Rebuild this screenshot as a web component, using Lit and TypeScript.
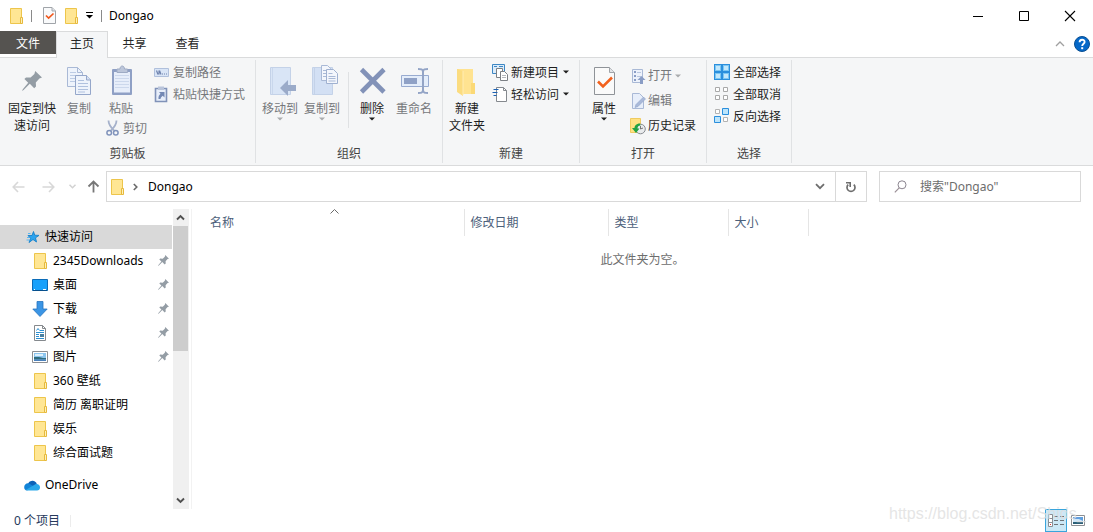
import { LitElement, html, svg, css, nothing, TemplateResult } from "lit";
import { customElement, property } from "lit/decorators.js";

/* ---------- icon artwork ---------- */

interface Art {
  w: number;
  h: number;
  body: TemplateResult;
}

const folderBody = svg`
  <path d="M2.5.5h11v15h-11z" fill="#ffe694" stroke="#edc54b"/>
  <path d="M12.5 9.5h2v6h-2z" fill="#fff0b8" stroke="#e6b93c"/>`;

const pinShape = svg`<path d="M13.2 0 20 6.6l-2.6.8-3.6 4 .2 4.2-1.8 1.6-4.4-4.4L1.6 19 0 20l.8-1.8 5.4-6.4L2.4 8l1.6-1.6 4.6.2 3.8-3.6z" fill="#949da5"/>`;

const ART: Record<string, Art> = {
  folder: { w: 16, h: 16, body: folderBody },
  checkDoc: {
    w: 13, h: 17,
    body: svg`<path d="M.5.5h8.5l3.5 3.5v12.5H.5z" fill="#f9fafb" stroke="#a0a4a9"/>
      <path d="M9 .5V4h3.5" fill="#dfe2e6" stroke="#a5a9ae"/>
      <path d="M3 8.5l2.600 2.600L10.500 6.500" fill="none" stroke="#f0571c" stroke-width="1.700"/>`,
  },
  qatMenu: { w: 7, h: 7, body: svg`<path d="M0 .5h7" stroke="#000"/><path d="M0 3h7L3.500 6.500z"/>` },
  min: { w: 10, h: 10, body: svg`<path d="M0 5.500h10" stroke="#000"/>` },
  max: { w: 10, h: 10, body: svg`<path d="M.5.5h9v9h-9z" fill="none" stroke="#000"/>` },
  close: { w: 10, h: 10, body: svg`<path d="M0 0l10 10M10 0L0 10" stroke="#000" stroke-width="1.100"/>` },
  collapse: { w: 10, h: 6, body: svg`<path d="M1 5l4-4 4 4" fill="none" stroke="#a0a0a0" stroke-width="1.300"/>` },
  help: {
    w: 16, h: 16,
    body: svg`<circle cx="8" cy="8" r="7.500" fill="#0568c8" stroke="#0a4f92"/>
      <path d="M5.600 6.200c0-3.200 5-3.200 5-.3C10.600 7.700 8.200 7.700 8.200 10" fill="none" stroke="#fff" stroke-width="1.900"/>
      <path d="M7.200 11.200h2v2h-2z" fill="#fff"/>`,
  },
  bigPin: { w: 32, h: 32, body: svg`<g transform="translate(6 5)">${pinShape}</g>` },
  pin: { w: 11, h: 11, body: svg`<g transform="scale(.55)">${pinShape}</g>` },
  copy: {
    w: 32, h: 32,
    body: svg`<path d="M4.500 1.500h10l5 5v14h-15z" fill="#eef3fb" stroke="#a9b9d6"/>
      <path d="M14.500 1.500v5h5" fill="none" stroke="#a9b9d6"/>
      <path d="M7 6.500h6M7 9.500h10M7 12.500h10M7 15.500h10" stroke="#bccbe4"/>
      <path d="M12.500 9.500h11l4 4v15h-15z" fill="#eef3fb" stroke="#95a7ca"/>
      <path d="M23.500 9.500v4.500h4.500" fill="#d5e0f2" stroke="#95a7ca"/>
      <path d="M15 14.500h6M15 17.500h10M15 20.500h10M15 23.500h10M15 26h7" stroke="#b0c1de"/>`,
  },
  paste: {
    w: 32, h: 32,
    body: svg`<rect x="7" y="3" width="20" height="26" rx="1" fill="#8fa0c5"/>
      <path d="M9 6h16v20.500H9z" fill="#e7eefa"/>
      <path d="M10 9.500h14M10 12.500h14M10 15.500h14M10 18.500h14M10 21.500h14" stroke="#ccd8ec"/>
      <path d="M12 3h3c0-4 4.500-4 4.500 0h3v3.500H12z" fill="#bcc6da" stroke="#9eabc4"/>`,
  },
  cut: {
    w: 13, h: 16,
    body: svg`<path d="M2.500.5c0 4 2.500 7 5.500 10M10.500.5c0 4-2.500 7-5.500 10" fill="none" stroke="#a5b1cb" stroke-width="1.800"/>
      <circle cx="3.200" cy="12.700" r="2.300" fill="none" stroke="#8093bb" stroke-width="1.500"/>
      <circle cx="9.800" cy="12.700" r="2.300" fill="none" stroke="#8093bb" stroke-width="1.500"/>`,
  },
  path: {
    w: 16, h: 16,
    body: svg`<path d="M1.500 4.500h14v8h-14z" fill="#d9e5f7" stroke="#b0c0dc"/>
      <path d="M3.500 6.500l1.500 4M6 6.500v4M6.500 6.500l1.500 4" stroke="#6f83ae" stroke-width="1.200"/>
      <path d="M9 10h1M11 10h1M13 10h1" stroke="#6f83ae"/>`,
  },
  shortcut: {
    w: 16, h: 16,
    body: svg`<path d="M2.500 2.500h11v13h-11z" fill="#e7eefa" stroke="#8092b8" stroke-width="1.600"/>
      <path d="M5 .5h6V4H5z" fill="#b9c4da"/>
      <path d="M6 6h5.500v5.500l-1.800-1.800C8 11 7.700 12 7.500 13L5.500 13c-.3-2.500.7-4 2-5.200z" fill="#7388b4"/>`,
  },
  move: {
    w: 32, h: 32,
    body: svg`<path d="M6.500 1.500h20v27h-20z" fill="#d9e5f6" stroke="#c4d2e8"/><path d="M8.500 2v26" stroke="#c9d7ec"/>
      <path d="M16 22l8-8v5h8v6h-8v5z" fill="#9babc9"/>`,
  },
  copyTo: {
    w: 32, h: 32,
    body: svg`<path d="M6.500 1.500h20v27h-20z" fill="#d3e0f4" stroke="#c4d2e8"/><path d="M8.500 2v26" stroke="#c4d2e8"/>
      <path d="M15.500-.5h6l3 3v12h-9z" fill="#f3f6fc" stroke="#a9b9d6"/>
      <path d="M17 4.500h4M17 7.500h4M17 10.500h4" stroke="#a9b9d6"/>
      <path d="M20.500 3.500h7l4 4v10h-11z" fill="#f3f6fc" stroke="#a0b1d0"/>
      <path d="M22.500 7.500h4M22.500 10.500h7M22.500 12.500h7M22.500 15h7" stroke="#a9b9d6"/>`,
  },
  delete: { w: 32, h: 32, body: svg`<path d="M5.500 3.500l22.500 22.500M28 3.500L5.500 26" stroke="#8292b8" stroke-width="4.600"/>` },
  rename: {
    w: 32, h: 32,
    body: svg`<path d="M3.500 9.500h27v11h-27z" fill="#e4edfa" stroke="#98abd0"/>
      <path d="M6 12h13v6H6z" fill="#8fa1c6"/>
      <path d="M20 3c3 0 5 0 5 3v18c0 3-2 3-5 3M30 3c-3 0-5 0-5 3v18c0 3 2 3 5 3" fill="none" stroke="#93a4c6" stroke-width="2"/>`,
  },
  bigFolder: {
    w: 32, h: 32,
    body: svg`<path d="M6 3h16v14h2v11H10l-4-3z" fill="#ffe391"/><path d="M6 3l6 2v25l-6-4z" fill="#fbdc80"/>
      <path d="M20 17h4v11h-4z" fill="#fbd976"/><path d="M12 5v24" stroke="#ffedb5"/>`,
  },
  newItem: {
    w: 16, h: 16,
    body: svg`<path d="M.5.5h12v9H.5z" fill="#dcecfa" stroke="#3d87c4"/><path d="M2 2.500h3M7 2.500h4" stroke="#3d87c4"/>
      <path d="M4.500 4.500h6v9h-6z" fill="#fff" stroke="#7c8085"/>
      <path d="M8.500 7.500h4l3 3v6h-7z" fill="#fff" stroke="#7c8085"/><path d="M10 11.500h4M10 13.500h4" stroke="#b4b8bd"/>`,
  },
  easy: {
    w: 16, h: 16,
    body: svg`<path d="M4.500 1.500h7l3 3v11h-10z" fill="#fff" stroke="#85898e"/><path d="M11.500 1.500v3h3" fill="none" stroke="#85898e"/>
      <path d="M1.500 3.500h5M.5 6.500h5M1.500 9.500h3" stroke="#1c62b3"/>`,
  },
  props: {
    w: 32, h: 32,
    body: svg`<path d="M6.500 1.500h15l5 5v22h-20z" fill="#fafafa" stroke="#8f9398"/>
      <path d="M21.500 1.500v5h5" fill="#e3e5e8" stroke="#a0a4a9"/>
      <path d="M10 15.500l5 5L24 11.500" fill="none" stroke="#f2611d" stroke-width="2.600"/>`,
  },
  open: {
    w: 16, h: 16,
    body: svg`<path d="M2.500 1.500h10v13h-10z" fill="#edf2fb" stroke="#a9b9d6"/>
      <path d="M4 3h2v2H4zM4 7h2v2H4zM4 11h2v2H4z" fill="#8a9dc5"/><path d="M7 4.500h4M7 8.500h4" stroke="#b8c6df"/>
      <path d="M11.500 8l4 4h-2.500V16h-3v-4H7.500z" fill="#8a9dc5"/>`,
  },
  edit: {
    w: 16, h: 16,
    body: svg`<path d="M2.500.5h7l4 4v11h-11z" fill="#e7eefa" stroke="#a9b9d6"/>
      <path d="M5 14.500l1-3L13.500 4l2 2L8 13.500z" fill="#a9b9d9" stroke="#8fa2c8" stroke-width=".6"/>`,
  },
  history: {
    w: 16, h: 16,
    body: svg`<path d="M.5.5h10v14H.5z" fill="#ffe182" stroke="#efcb60"/>
      <circle cx="10.500" cy="11" r="4.800" fill="#e9ebed" stroke="#868b90"/>
      <path d="M10.500 8v3l2.500-1" fill="none" stroke="#777"/>
      <path d="M10 5.500C6 5.500 4.500 8 4.500 10H2l4 5 3.500-4.500H7.500C7.500 8.500 8.500 7.500 10.500 7.500z" fill="#23a243"/>`,
  },
  selAll: {
    w: 16, h: 16,
    body: svg`<path d="M0 0h16v16H0z" fill="#2b8fdd"/>
      <path d="M1 1h6v6H1zM9 1h6v6H9zM1 9h6v6H1zM9 9h6v6H9z" fill="#7cc6f3"/>
      <path d="M2 2h4v4H2zM10 2h4v4h-4zM2 10h4v4H2zM10 10h4v4h-4z" fill="#c3e8fc"/>`,
  },
  selNone: { w: 16, h: 16, body: svg`<path d="M1.500 1.500h4v4h-4zM9.500 1.500h4v4h-4zM1.500 9.500h4v4h-4zM9.500 9.500h4v4h-4z" fill="#fff" stroke="#a9a9a9"/>` },
  selInv: {
    w: 16, h: 16,
    body: svg`<path d="M1.500 1.500h4v4h-4zM9.500 9.500h4v4h-4z" fill="#fff" stroke="#b3b3b3"/>
      <path d="M8.500.5h6v6h-6zM.5 8.500h6v6h-6z" fill="#bce4fb" stroke="#2b8fdd"/>`,
  },
  left: { w: 13, h: 12, body: svg`<path d="M12.500 6H1.500M6 1L1.200 6 6 11" fill="none" stroke="#d8d8d8" stroke-width="1.600"/>` },
  right: { w: 13, h: 12, body: svg`<path d="M.5 6h11M7 1l4.800 5L7 11" fill="none" stroke="#d8d8d8" stroke-width="1.600"/>` },
  recent: { w: 7, h: 5, body: svg`<path d="M.5.8l3 3 3-3" fill="none" stroke="#d2d2d2" stroke-width="1.500"/>` },
  up: { w: 13, h: 13, body: svg`<path d="M6.500 12.500V2M1.500 6.500l5-5 5 5" fill="none" stroke="#777" stroke-width="1.800"/>` },
  crumb: { w: 5, h: 8, body: svg`<path d="M.8 1l3 3-3 3" fill="none" stroke="#6a6a6a" stroke-width="1.600"/>` },
  down: { w: 10, h: 7, body: svg`<path d="M1 1.200l4 4 4-4" fill="none" stroke="#6e6e6e" stroke-width="1.800"/>` },
  refresh: {
    w: 12, h: 12,
    body: svg`<path d="M3.200 3.600a4 4 0 1 0 5.600 0" fill="none" stroke="#6e6e6e" stroke-width="1.700"/>
      <path d="M1 1.800h4.200v4.200" fill="none" stroke="#6e6e6e" stroke-width="1.600"/>`,
  },
  search: { w: 13, h: 13, body: svg`<circle cx="8" cy="4.800" r="4" fill="none" stroke="#8b8590"/><path d="M5.200 7.800L.8 12.300" stroke="#9b8f97" stroke-width="1.200"/>` },
  star: {
    w: 16, h: 16,
    body: svg`<path d="M9.500 2.500l1.200 3.700 4.300.2-3.500 2.400 1 4.200-3.500-2.500L5 13.500l1.600-4.200L4 6.500h4z" fill="#2ba3ee" stroke="#1580c9" stroke-width=".9"/>
      <path d="M4 4.500h2.500M3 8.500h2M2.500 11h3" stroke="#5bb6f0"/>`,
  },
  desktop: {
    w: 16, h: 16,
    body: svg`<path d="M.5 2.500h15v11H.5z" fill="#18a1fb" stroke="#0b6cb8"/><path d="M1 13.500h14" stroke="#074f8b"/>
      <path d="M2 12.500h1M11 12.500h3" stroke="#fff"/>`,
  },
  download: { w: 16, h: 16, body: svg`<path d="M5 .5h6v7.500h4.200L8 15.500.8 8H5z" fill="#3b95e5" stroke="#2674bf" stroke-width=".8"/>` },
  docs: {
    w: 16, h: 16,
    body: svg`<path d="M2.500.5h8l3 3v12h-11z" fill="#fff" stroke="#85898d"/><path d="M10.500.5v3h3" fill="none" stroke="#85898d"/>
      <path d="M4.500 5.500l1.500-2 1.500 2M8 5.500h4M4 7.500h8M4 9.500h3M4 11.500h3M4 13.500h8" fill="none" stroke="#2d8fd0"/>
      <path d="M8 9h4v3H8z" fill="#4a7f9f"/>`,
  },
  picture: {
    w: 16, h: 16,
    body: svg`<path d="M.5 2.500h15v11H.5z" fill="#fff" stroke="#8c8f93"/><path d="M2 4h12v8H2z" fill="#8cc5ee"/>
      <path d="M3 5h8v2H3z" fill="#dcf0fc"/><path d="M2 8h5l4 1h3v1.500H2z" fill="#2f6c7c"/><path d="M2 10.500h12V12H2z" fill="#4a80bb"/>`,
  },
  cloud: {
    w: 16, h: 16,
    body: svg`<path d="M4 6.500a4.800 4.800 0 0 1 8.800.5L8 11z" fill="#0c62b8"/><path d="M.2 10.500A3.600 3.600 0 0 1 5 6.600l6 3.400-8 3.400A3 3 0 0 1 .2 10.500z" fill="#1184d8"/>
      <path d="M2 12.800l9-5.300c2.500-1.200 5 .6 5 3 0 1.800-1.300 3-3 3H4c-1 0-1.600-.3-2-.7z" fill="#29a8ea"/>`,
  },
  chevUp: { w: 9, h: 7, body: svg`<path d="M1 5.500L4.500 2 8 5.500" fill="none" stroke="#505050" stroke-width="1.900"/>` },
  chevDown: { w: 9, h: 7, body: svg`<path d="M1 1.500L4.500 5 8 1.500" fill="none" stroke="#505050" stroke-width="1.900"/>` },
  sort: { w: 9, h: 5, body: svg`<path d="M.5 4.500l4-4 4 4" fill="none" stroke="#6a6a6a"/>` },
  caret: { w: 6, h: 4, body: svg`<path d="M0 .5h6L3 3.500z" fill="currentColor"/>` },
  details: {
    w: 16, h: 14,
    body: svg`<path d="M.5.500h4v12h-4zM.5 4.500h4M.5 8.500h4" fill="#fff" stroke="#8a8f94"/>
      <path d="M2 10h1v1H2z" fill="#d33"/><path d="M6 2.500h4M12 2.500h4M6 6.500h4M12 6.500h4M6 10.500h4M12 10.500h4" stroke="#6f7479"/>`,
  },
  thumbs: {
    w: 14, h: 11,
    body: svg`<path d="M.5.500h13v10H.5z" fill="#fff" stroke="#8c8f93"/><path d="M2 2h10v7H2z" fill="#5f9fdf"/>
      <path d="M2 4l6 0 4 2v1H2z" fill="#cfe6f8"/><path d="M2 7h10v2H2z" fill="#2c5f77"/>`,
  },
};

const icon = (name: string) => {
  const a = ART[name];
  return html`<svg class="ico" aria-hidden="true" width=${a.w} height=${a.h} viewBox="0 0 ${a.w} ${a.h}">${a.body}</svg>`;
};

const base = css`
  *, *::before, *::after { box-sizing: border-box; }
  button, input {
    font: inherit; color: inherit; background: none; border: 0; padding: 0; margin: 0; border-radius: 0;
  }
  .ico { display: block; flex: none; overflow: visible; }
`;

/* ---------- ribbon button ---------- */

@customElement("ribbon-button")
class RibbonButton extends LitElement {
  @property() icon = "";
  @property() label = "";
  @property({ type: Boolean }) large = false;
  @property({ type: Boolean }) menu = false;
  @property({ type: Boolean }) off = false;

  static styles = [base, css`
    :host { display: block; }
    button { display: flex; align-items: center; gap: var(--gap, 3px); line-height: 17px; color: #1e1e1e; white-space: nowrap; }
    button:disabled { color: #76787b; }
    .small { height: var(--row, 22px); }
    .small .caret { margin-left: 1px; }
    .large { flex-direction: column; width: 100%; gap: 0; padding-top: 8px; }
    .large .text { margin-top: 2px; white-space: pre-line; }
    button:disabled .caret { color: #a9abad; }
  `];

  render() {
    return html`<button type="button" class=${this.large ? "large" : "small"} ?disabled=${this.off}>
      ${icon(this.icon)}<span class="text">${this.label}</span>
      ${this.menu ? html`<span class="caret">${icon("caret")}</span>` : nothing}
    </button>`;
  }
}

/* ---------- navigation entries ---------- */

interface Place { icon: string; label: string; pinned?: boolean; }

const PLACES: Place[] = [
  { icon: "folder", label: "2345Downloads", pinned: true },
  { icon: "desktop", label: "桌面", pinned: true },
  { icon: "download", label: "下载", pinned: true },
  { icon: "docs", label: "文档", pinned: true },
  { icon: "picture", label: "图片", pinned: true },
  { icon: "folder", label: "360 壁纸" },
  { icon: "folder", label: "简历 离职证明" },
  { icon: "folder", label: "娱乐" },
  { icon: "folder", label: "综合面试题" },
];

@customElement("app-root")
class AppRoot extends LitElement {
  static styles = [base, css`
    :host {
      display: flex; flex-direction: column; height: 100vh; min-height: 420px; position: relative; overflow: hidden;
      background: #fff; color: #000;
      font: 12px/17px "Noto Sans", "Noto Sans CJK SC", sans-serif;
    }
    .titlebar { display: flex; align-items: center; height: 31px; padding-left: 8px; }
    .rule { width: 1px; height: 12px; background: #8a8a8a; }
    .titlebar .rule:first-of-type { margin: 0 11px 0 7px; }
    .quick { display: flex; align-items: center; gap: 7px; margin-right: 8px; }
    .title { font: inherit; margin: 0 0 0 7px; flex: 1; }
    .winbtn { width: 46px; height: 31px; display: grid; place-items: center; }

    .tabs { display: flex; height: 27px; border-bottom: 1px solid #dadbdc; }
    .tab { width: 53px; height: 26px; color: #262626; padding-bottom: 1px; }
    .tab.file { width: 56px; height: 23px; background: #555350; color: #fff; padding: 1px 0 0; }
    .tab.active { width: 52px; height: 27px; background: #f5f6f7; border: 1px solid #dadbdc; border-bottom: 0; padding-bottom: 3px; }
    .spacer { flex: 1; }
    .tabs .aux { display: grid; place-items: center; height: 26px; width: 22px; }

    .ribbon { display: flex; height: 108px; background: #f5f6f7; border-bottom: 1px solid #dadbdc; }
    .group { display: flex; flex-direction: column; border-right: 1px solid transparent;
      border-image: linear-gradient(transparent 3px, #e0e2e4 3px, #e0e2e4 104px, transparent 104px) 1; }
    .group h2 { font: inherit; margin: 0; text-align: center; color: #444; height: 20px; }
    .body { display: flex; flex: 1; }
    .clip { width: 256px; --gap: 4px; } .clip .body { padding-left: 4px; }
    .org { width: 187px; } .org .body { padding-left: 3px; }
    .new { width: 137px; } .new .body { padding-left: 4px; }
    .opn { width: 127px; } .opn .body { padding-left: 4px; }
    .sel { width: 85px; } .sel .body { padding-left: 7px; }
    .w56 { width: 56px; } .w46 { width: 46px; } .w42 { width: 42px; } .w40 { width: 40px; } .w38 { width: 38px; }
    .stack { display: flex; flex-direction: column; padding: 3px 0 0 5px; }
    .sel .stack { padding-left: 0; }
    .opn .stack { --row: 25px; padding-top: 5px; padding-left: 6px; --gap: 2px; }
    .pastecol { width: 50px; }
    .cutrow { padding-left: 8px; }
    .split { width: 1px; height: 56px; background: #dfe1e3; margin: 14px 2px 0 5px; }

    .nav { display: flex; align-items: center; height: 41px; padding: 0 12px 0 12px; }
    .nav > button { display: grid; place-items: center; height: 30px; }
    .b1 { width: 13px; margin-right: 17px; } .b2 { width: 13px; margin-right: 14px; }
    .b3 { width: 7px; margin-right: 11px; } .b4 { width: 13px; margin-right: 6px; }
    .address { display: flex; flex: 1; height: 31px; border: 1px solid #d9d9d9; align-items: stretch; margin-right: 12px; }
    .address ol { display: flex; align-items: center; list-style: none; margin: 0; padding: 0 0 0 2px; flex: 1; }
    .address li { display: flex; align-items: center; }
    .address a { color: #000; text-decoration: none; margin-left: 10px; }
    .address .sep { margin-left: 8px; }
    .address button { display: grid; place-items: center; width: 31px; }
    .address .reload { border-left: 1px solid #d9d9d9; }
    .search { display: flex; align-items: center; width: 202px; height: 31px; border: 1px solid #d9d9d9; padding-left: 14px; gap: 13px; }
    .search input { flex: 1; min-width: 0; outline: 0; height: 17px; }
    .search input::placeholder { color: #6d6d6d; opacity: 1; }

    .main { display: flex; flex: 1; min-height: 0; padding-top: 2px; }
    .side { display: flex; width: 192px; flex: none; border-right: 1px solid #f2f2f2; }
    .tree { flex: 1; min-width: 0; overflow: hidden; list-style: none; margin: 0; padding: 16px 1px 0 0; }
    .tree a { display: flex; align-items: center; height: 24px; color: #000; text-decoration: none; white-space: nowrap; gap: 5px; padding: 0 3px 1px 32px; }
    .tree .root { padding-left: 24px; }
    .tree .on { background: #d9d9d9; }
    .tree .gap { margin-top: 8px; }
    .tree .name { flex: 1; }
    .scroll { width: 16px; margin-right: 2px; background: #f0f0f0; display: flex; flex-direction: column; }
    .scroll button { width: 15px; height: 17px; display: grid; place-items: center; }
    .track { flex: 1; width: 15px; }
    .thumb { height: 47%; background: #cdcdcd; }

    .files { flex: 1; min-width: 0; }
    table { width: 100%; border-collapse: collapse; table-layout: fixed; }
    .c1 { width: 272px; } .c2 { width: 144px; } .c3 { width: 120px; } .c4 { width: 80px; }
    th { height: 27px; padding: 0 0 0 6px; font-weight: 400; text-align: left; color: #4c607a; border-right: 1px solid #e5e5e5; }
    th:first-child { padding-left: 18px; position: relative; }
    th:last-child { border: 0; }
    th .ico { position: absolute; top: 0; left: 138px; }
    td { padding: 15px 0 0; text-align: center; color: #6d6d6d; }

    .status { display: flex; align-items: center; height: 23px; padding: 0 4px 0 14px; color: #26395c; }
    .status .line { width: 1px; height: 12px; background: #ececec; margin-left: 10px; }
    .view { width: 22px; height: 23px; display: grid; place-items: center; }
    .view.on { background: #cce8f6; border: 1px solid #3aa5dc; }
    .mark { position: absolute; left: calc(100% - 204px); bottom: 9px; font: 16px/18px "Liberation Sans", sans-serif;
      color: rgba(222, 222, 222, .8); pointer-events: none; white-space: nowrap; }
  `];

  private btn(cls: string, ico: string, label: string, o: { large?: boolean; menu?: boolean; off?: boolean } = {}) {
    return html`<ribbon-button class=${cls} icon=${ico} label=${label}
      ?large=${o.large} ?menu=${o.menu} ?off=${o.off}></ribbon-button>`;
  }

  private ribbon() {
    const b = this.btn;
    return html`<section class="ribbon">
      <div class="group clip"><div class="body">
        ${b("w56", "bigPin", "固定到快\n速访问", { large: true })}
        ${b("w38", "copy", "复制", { large: true, off: true })}
        <div class="pastecol">
          ${b("w46", "paste", "粘贴", { large: true, off: true })}
          ${b("cutrow", "cut", "剪切", { off: true })}
        </div>
        <div class="stack">
          ${b("", "path", "复制路径", { off: true })}
          ${b("", "shortcut", "粘贴快捷方式", { off: true })}
        </div>
      </div><h2>剪贴板</h2></div>
      <div class="group org"><div class="body">
        ${b("w42", "move", "移动到", { large: true, menu: true, off: true })}
        ${b("w42", "copyTo", "复制到", { large: true, menu: true, off: true })}
        <div class="split"></div>
        ${b("w42", "delete", "删除", { large: true, menu: true })}
        ${b("w42", "rename", "重命名", { large: true, off: true })}
      </div><h2>组织</h2></div>
      <div class="group new"><div class="body">
        ${b("w40", "bigFolder", "新建\n文件夹", { large: true })}
        <div class="stack">
          ${b("", "newItem", "新建项目", { menu: true })}
          ${b("", "easy", "轻松访问", { menu: true })}
        </div>
      </div><h2>新建</h2></div>
      <div class="group opn"><div class="body">
        ${b("w40", "props", "属性", { large: true, menu: true })}
        <div class="stack">
          ${b("", "open", "打开", { menu: true, off: true })}
          ${b("", "edit", "编辑", { off: true })}
          ${b("", "history", "历史记录")}
        </div>
      </div><h2>打开</h2></div>
      <div class="group sel"><div class="body">
        <div class="stack">
          ${b("", "selAll", "全部选择")}
          ${b("", "selNone", "全部取消")}
          ${b("", "selInv", "反向选择")}
        </div>
      </div><h2>选择</h2></div>
    </section>`;
  }

  render() {
    return html`
      <header class="titlebar">
        ${icon("folder")}<div class="rule"></div>
        <div class="quick">
          <button type="button" aria-label="属性">${icon("checkDoc")}</button>
          <button type="button" aria-label="新建文件夹">${icon("folder")}</button>
          <button type="button" aria-label="自定义快速访问工具栏">${icon("qatMenu")}</button>
        </div>
        <div class="rule"></div>
        <h1 class="title">Dongao</h1>
        <button type="button" class="winbtn" aria-label="最小化">${icon("min")}</button>
        <button type="button" class="winbtn" aria-label="最大化">${icon("max")}</button>
        <button type="button" class="winbtn" aria-label="关闭">${icon("close")}</button>
      </header>
      <nav class="tabs">
        <button type="button" class="tab file">文件</button>
        <button type="button" class="tab active">主页</button>
        <button type="button" class="tab">共享</button>
        <button type="button" class="tab">查看</button>
        <div class="spacer"></div>
        <button type="button" class="aux" aria-label="最小化功能区">${icon("collapse")}</button>
        <button type="button" class="aux" aria-label="帮助">${icon("help")}</button>
      </nav>
      ${this.ribbon()}
      <div class="nav">
        <button type="button" class="b1" aria-label="后退" disabled>${icon("left")}</button>
        <button type="button" class="b2" aria-label="前进" disabled>${icon("right")}</button>
        <button type="button" class="b3" aria-label="最近位置" disabled>${icon("recent")}</button>
        <button type="button" class="b4" aria-label="向上">${icon("up")}</button>
        <div class="address">
          <ol><li>${icon("folder")}</li><li class="sep">${icon("crumb")}<a href="#">Dongao</a></li></ol>
          <button type="button" aria-label="以前的位置">${icon("down")}</button>
          <button type="button" class="reload" aria-label="刷新">${icon("refresh")}</button>
        </div>
        <label class="search">${icon("search")}<input type="text" aria-label="搜索" placeholder='搜索"Dongao"'></label>
      </div>
      <div class="main">
        <nav class="side">
          <ul class="tree">
            <li><a href="#" class="root on">${icon("star")}<span class="name">快速访问</span></a></li>
            ${PLACES.map((p) => html`<li><a href="#">${icon(p.icon)}<span class="name">${p.label}</span>${p.pinned ? icon("pin") : nothing}</a></li>`)}
            <li class="gap"><a href="#" class="root">${icon("cloud")}<span class="name">OneDrive</span></a></li>
          </ul>
          <div class="scroll">
            <button type="button" aria-label="向上滚动">${icon("chevUp")}</button>
            <div class="track"><div class="thumb"></div></div>
            <button type="button" aria-label="向下滚动">${icon("chevDown")}</button>
          </div>
        </nav>
        <main class="files">
          <table>
            <colgroup><col class="c1"><col class="c2"><col class="c3"><col class="c4"><col></colgroup>
            <thead><tr><th>名称${icon("sort")}</th><th>修改日期</th><th>类型</th><th>大小</th><th></th></tr></thead>
            <tbody><tr><td colspan="5">此文件夹为空。</td></tr></tbody>
          </table>
        </main>
      </div>
      <footer class="status">
        <span>0 个项目</span><div class="line"></div><div class="spacer"></div>
        <button type="button" class="view on" aria-label="详细信息">${icon("details")}</button>
        <button type="button" class="view" aria-label="大缩略图">${icon("thumbs")}</button>
      </footer>
      <div class="mark">https://blog.csdn.net/Shids_</div>
    `;
  }
}
